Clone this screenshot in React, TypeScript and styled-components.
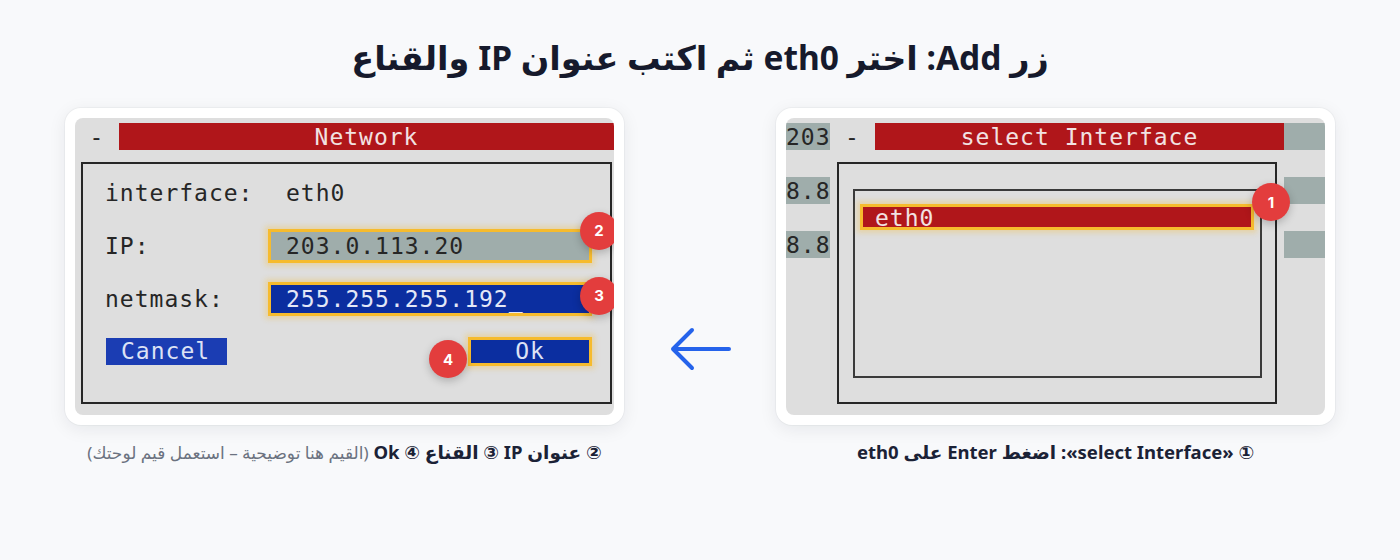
import styled, { createGlobalStyle } from 'styled-components'

const GlobalStyle = createGlobalStyle`
  html, body {
    margin: 0;
    padding: 0;
    background: #f8f9fb;
  }
  body {
    font-family: "Noto Sans", "DejaVu Sans", sans-serif;
  }
`

const Page = styled.div`
  width: 1400px;
  height: 560px;
  direction: rtl;
  display: flex;
  flex-direction: column;
  align-items: center;
`

const Title = styled.h1`
  margin: 33px 0 0;
  font-size: 33.5px;
  line-height: 48px;
  font-weight: 700;
  color: #161a2c;
`

const Row = styled.div`
  margin-top: 27px;
  display: flex;
  align-items: flex-start;
`

const Column = styled.div`
  width: 559px;
  display: flex;
  flex-direction: column;
  align-items: center;
`

const Card = styled.div`
  width: 559px;
  height: 317px;
  box-sizing: border-box;
  padding: 10px;
  background: #ffffff;
  border-radius: 16px;
  box-shadow: 0 4px 18px rgba(15, 23, 42, 0.08), 0 0 0 1px rgba(15, 23, 42, 0.03);
  direction: ltr;
`

const Screen = styled.div`
  width: 100%;
  height: 100%;
  background: #dedede;
  border-radius: 8px;
  overflow: hidden;
  font-family: "DejaVu Sans Mono", "Liberation Mono", monospace;
  font-size: 23px;
  letter-spacing: 1px;
  color: #262626;
  display: flex;
`

const ArrowCell = styled.div`
  width: 152px;
  height: 317px;
  display: flex;
  align-items: center;
  justify-content: center;
  padding-top: 164px;
  box-sizing: border-box;
`

const Caption = styled.div`
  margin-top: 14px;
  font-size: 18.5px;
  line-height: 26px;
  font-weight: 700;
  color: #1b2236;
  white-space: nowrap;
`

const Note = styled.span`
  font-weight: 400;
  color: #6b7280;
  font-size: 17px;
`

/* terminal parts */

const Main = styled.div`
  flex: 1;
  display: flex;
  flex-direction: column;
`

const TopRow = styled.div`
  margin-top: 5px;
  height: 27px;
  display: flex;
  align-items: center;
`

const Dash = styled.div<{ $w: number }>`
  width: ${p => p.$w}px;
  height: 27px;
  line-height: 29px;
  text-align: center;
`

const TitleBar = styled.div`
  flex: 1;
  height: 27px;
  line-height: 29px;
  background: #b0161a;
  color: #f2e2e2;
  text-align: center;
`

const Frame = styled.div<{ $ml: number; $mr: number }>`
  margin: 12px ${p => p.$mr}px 0 ${p => p.$ml}px;
  height: 242px;
  box-sizing: border-box;
  border: 2px solid #262626;
`

const Form = styled.div`
  padding: 2px 18px 0 22px;
  display: grid;
  grid-template-columns: 163px 1fr;
  grid-auto-rows: 53px;
  align-items: center;
`

const Label = styled.div`
  white-space: pre;
`

const Value = styled.div`
  padding-left: 18px;
`

const Anchor = styled.div`
  position: relative;
`

const Field = styled.div<{ $bg: string; $fg: string }>`
  height: 28px;
  line-height: 28px;
  padding-left: 15px;
  background: ${p => p.$bg};
  color: ${p => p.$fg};
  border: 3px solid #f6bb2d;
  box-shadow: 0 0 5px 3px rgba(246, 187, 45, 0.3);
`

const Buttons = styled.div`
  grid-column: 1 / span 2;
  display: flex;
  justify-content: space-between;
  align-items: center;
  margin-left: 1px;
`

const Cancel = styled.div`
  width: 121px;
  height: 27px;
  line-height: 27px;
  background: #1b3db3;
  color: #dde2f5;
  padding-left: 15px;
  box-sizing: border-box;
`

const OkButton = styled.div`
  width: 118px;
  height: 23px;
  line-height: 23px;
  background: #0b2ea0;
  color: #dde2f5;
  text-align: center;
  border: 3px solid #f6bb2d;
  box-shadow: 0 0 5px 3px rgba(246, 187, 45, 0.3);
`

const Badge = styled.div<{ $x: number; $y: number }>`
  position: absolute;
  left: ${p => p.$x}px;
  top: ${p => p.$y}px;
  width: 38px;
  height: 38px;
  margin: -19px 0 0 -19px;
  border-radius: 50%;
  background: #e33d3d;
  color: #ffffff;
  font-family: "Inter", "Noto Sans", sans-serif;
  font-weight: 700;
  font-size: 15px;
  letter-spacing: 0;
  display: flex;
  align-items: center;
  justify-content: center;
  box-shadow: 0 3px 8px rgba(0, 0, 0, 0.22);
  z-index: 2;
`

const Strip = styled.div<{ $w: number; $align: string }>`
  width: ${p => p.$w}px;
  padding-top: 5px;
  display: flex;
  flex-direction: column;
  gap: 27px;
  text-align: ${p => p.$align};
`

const StripCell = styled.div`
  height: 27px;
  line-height: 28px;
  background: #9fadab;
  overflow: hidden;
  white-space: nowrap;
  color: #262626;
`

const ListBox = styled.div`
  margin: 25px 13px 0 14px;
  height: 189px;
  box-sizing: border-box;
  border: 2px solid #3a3a3a;
  padding: 13px 6px 0 5px;
`

const ListItem = styled.div`
  height: 20px;
  line-height: 22px;
  padding-left: 12px;
  background: #b0161a;
  color: #f2e2e2;
  border: 3px solid #f6bb2d;
  box-shadow: 0 0 5px 3px rgba(246, 187, 45, 0.3);
`

function Arrow() {
  return (
    <svg width="64" height="48" viewBox="0 0 64 48" fill="none">
      <path
        d="M61 24H5M24 5L5 24l19 19"
        stroke="#2563eb"
        strokeWidth="4"
        strokeLinecap="round"
        strokeLinejoin="round"
      />
    </svg>
  )
}

function SelectScreen() {
  return (
    <Screen>
      <Strip $w={44} $align="right">
        <StripCell>203</StripCell>
        <StripCell>8.8</StripCell>
        <StripCell>8.8</StripCell>
      </Strip>
      <Main>
        <TopRow>
          <Dash $w={45}>-</Dash>
          <TitleBar>select Interface</TitleBar>
        </TopRow>
        <Frame $ml={7} $mr={7}>
          <ListBox>
            <Anchor>
              <ListItem>eth0</ListItem>
              <Badge $x={411} $y={-2}>1</Badge>
            </Anchor>
          </ListBox>
        </Frame>
      </Main>
      <Strip $w={41} $align="left">
        <StripCell />
        <StripCell />
        <StripCell />
      </Strip>
    </Screen>
  )
}

function NetworkScreen() {
  return (
    <Screen>
      <Main>
        <TopRow>
          <Dash $w={44}>-</Dash>
          <TitleBar>Network</TitleBar>
        </TopRow>
        <Frame $ml={6} $mr={2}>
          <Form>
            <Label>interface:</Label>
            <Value>eth0</Value>
            <Label>IP:</Label>
            <Anchor>
              <Field $bg="#9fadab" $fg="#262626">203.0.113.20</Field>
              <Badge $x={331} $y={2}>2</Badge>
            </Anchor>
            <Label>netmask:</Label>
            <Anchor>
              <Field $bg="#0b2ea0" $fg="#e3e7f7">255.255.255.192_</Field>
              <Badge $x={331} $y={14}>3</Badge>
            </Anchor>
            <Buttons>
              <Cancel>Cancel</Cancel>
              <Anchor>
                <OkButton>Ok</OkButton>
                <Badge $x={-20} $y={22}>4</Badge>
              </Anchor>
            </Buttons>
          </Form>
        </Frame>
      </Main>
    </Screen>
  )
}

export default function App() {
  return (
    <>
      <GlobalStyle />
      <Page>
        <Title>زر Add: اختر eth0 ثم اكتب عنوان IP والقناع</Title>
        <Row>
          <Column>
            <Card>
              <SelectScreen />
            </Card>
            <Caption>① «select Interface»: اضغط Enter على eth0</Caption>
          </Column>
          <ArrowCell>
            <Arrow />
          </ArrowCell>
          <Column>
            <Card>
              <NetworkScreen />
            </Card>
            <Caption>
              ② عنوان IP ③ القناع ④ Ok <Note>(القيم هنا توضيحية – استعمل قيم لوحتك)</Note>
            </Caption>
          </Column>
        </Row>
      </Page>
    </>
  )
}
